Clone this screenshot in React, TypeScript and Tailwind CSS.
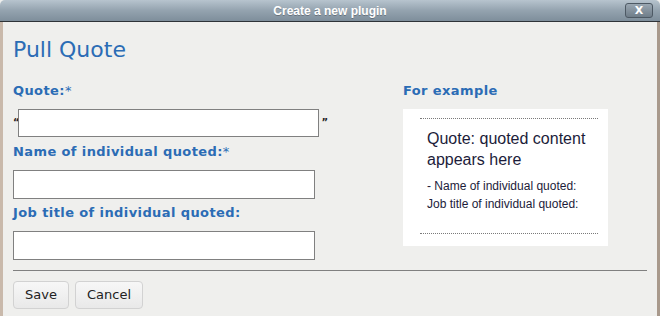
import React from "react";

const blue = "text-[#2b6cb5]";

function Label({ children, className = "" }: { children: React.ReactNode; className?: string }) {
  return (
    <div
      className={`h-[16px] text-[13px] leading-[16px] font-bold tracking-[0.4px] ${blue} whitespace-nowrap ${className}`}
      style={{ fontFamily: '"DejaVu Sans", Verdana, sans-serif' }}
    >
      {children}
    </div>
  );
}

export default function App() {
  return (
    <div className="w-[660px] h-[316px] overflow-hidden bg-[#efefed] flex flex-col">
      {/* Title bar */}
      <div className="relative h-[22px] shrink-0 rounded-t-[5px] bg-gradient-to-b from-[#b7c4ce] via-[#94a3af] to-[#7e8e9b] border-b border-[#2e3338] flex items-center justify-center">
        <span
          className="text-white text-[12px] font-bold leading-none [text-shadow:0_1px_0_rgba(0,0,0,0.25)]"
          style={{ fontFamily: '"Liberation Sans", Arial, sans-serif' }}
        >
          Create a new plugin
        </span>
        <div className="absolute left-[625px] top-[3px] w-[28px] h-[15px] rounded-[3px] border border-[#4d5964] bg-gradient-to-b from-[#9aa7b2] to-[#6f7d89] flex items-center justify-center">
          <span
            className="text-white text-[11px] font-bold leading-none"
            style={{ fontFamily: '"DejaVu Sans", Verdana, sans-serif' }}
          >
            X
          </span>
        </div>
      </div>

      {/* Body */}
      <div className="flex-1 flex border-l-[3px] border-l-[#c9b9ab] border-r-[3px] border-r-[#a8998c]">
        <div className="flex-1 pl-[10px] pt-[15px] flex flex-col">
          <h1
            className={`h-[26px] text-[22px] leading-[26px] font-normal ${blue}`}
            style={{ fontFamily: '"DejaVu Sans", Verdana, sans-serif' }}
          >
            Pull Quote
          </h1>

          <div className="flex">
            {/* Left column */}
            <div className="w-[315px] flex flex-col">
              <Label className="mt-[20px]">
                Quote:<span className="font-normal">*</span>
              </Label>
              <div className="mt-[10px] flex items-center h-[28px]">
                <span className="w-[5px] text-[10px] leading-none text-[#222] font-bold" style={{ fontFamily: '"DejaVu Sans", Verdana, sans-serif' }}>“</span>
                <div className="w-[302px] h-[28px] bg-white border border-[#808080]" />
                <span className="ml-[2px] text-[10px] leading-none text-[#222] font-bold" style={{ fontFamily: '"DejaVu Sans", Verdana, sans-serif' }}>”</span>
              </div>
              <Label className="mt-[7px]">
                Name of individual quoted:<span className="font-normal">*</span>
              </Label>
              <div className="mt-[10px] w-[302px] h-[29px] bg-white border border-[#808080]" />
              <Label className="mt-[6px]">Job title of individual quoted:</Label>
              <div className="mt-[10px] w-[302px] h-[29px] bg-white border border-[#808080]" />
            </div>

            {/* Right column */}
            <div className="ml-[75px] flex flex-col">
              <Label className="mt-[20px]">For example</Label>
              <div
                className="mt-[10px] w-[205px] h-[137px] bg-white pt-[9px] pl-[17px] pr-[10px]"
                style={{ fontFamily: '"Liberation Sans", Arial, sans-serif' }}
              >
                <div className="border-t border-dotted border-[#7a7a7a]" />
                <div className="pl-[7px] pt-[9px] text-[16px] leading-[21px] text-[#1c1c3a]">
                  Quote: quoted content appears here
                </div>
                <div className="pl-[7px] mt-[7px] text-[12px] leading-[18px] text-[#1c1c3a]">
                  <div>- Name of individual quoted:</div>
                  <div>Job title of individual quoted:</div>
                </div>
                <div className="mt-[20px] border-t border-dotted border-[#7a7a7a]" />
              </div>
            </div>
          </div>

          <div className="mt-[10px] mr-[10px] border-t border-[#808080]" />

          <div className="mt-[10px] flex gap-[6px]">
            {["Save", "Cancel"].map((t) => (
              <button
                key={t}
                className={`h-[28px] ${t === "Save" ? "w-[56px]" : "w-[68px]"} rounded-[4px] border border-[#d2d2d2] bg-gradient-to-b from-[#f7f7f7] to-[#e9e9e9] text-[13px] text-[#222]`}
                style={{ fontFamily: '"DejaVu Sans", Verdana, sans-serif' }}
              >
                {t}
              </button>
            ))}
          </div>
        </div>
      </div>
    </div>
  );
}
